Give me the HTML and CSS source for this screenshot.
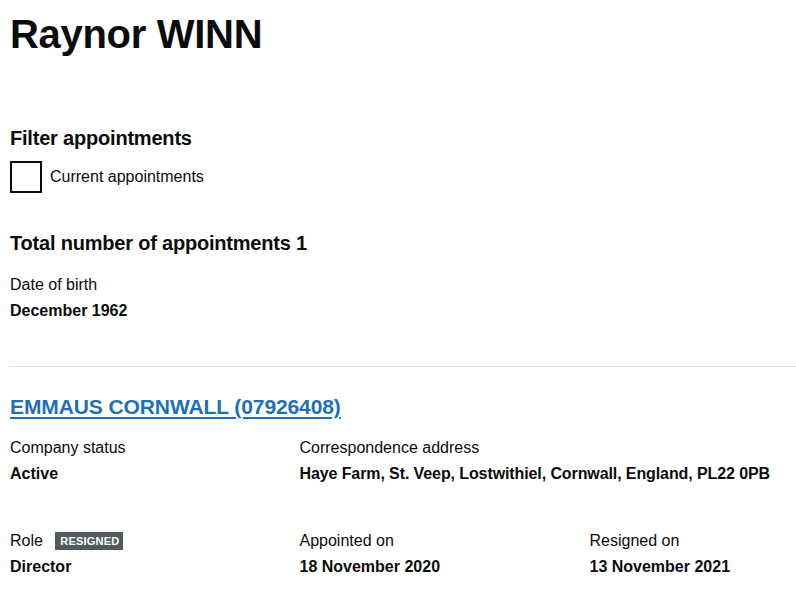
FILE: index.html
```html
<!DOCTYPE html>
<html lang="en">

<head>
    <meta charset="UTF-8">
    <meta name="viewport" content="width=device-width, initial-scale=1.0">
    <title>Raynor WINN personal appointments</title>
    <link rel="stylesheet" href="styles.css">
</head>

<body>
    <main class="page">
        <h1 class="officer-name">Raynor WINN</h1>

        <!-- filter -->
        <form class="filter">
            <h2 class="heading-m">Filter appointments</h2>
            <label class="checkbox">
                <input type="checkbox" class="checkbox-input">
                <span class="checkbox-box"></span>
                <span class="checkbox-label">Current appointments</span>
            </label>
        </form>

        <h2 class="heading-m total">Total number of appointments 1</h2>

        <dl class="dob">
            <dt>Date of birth</dt>
            <dd>December 1962</dd>
        </dl>

        <hr class="break">

        <!-- appointment -->
        <div class="appointment">
            <h2 class="appointment-title">
                <a href="#" class="link">EMMAUS CORNWALL (07926408)</a>
            </h2>

            <div class="row">
                <dl class="col">
                    <dt>Company status</dt>
                    <dd>Active</dd>
                </dl>
                <dl class="col col-wide">
                    <dt>Correspondence address</dt>
                    <dd class="address">Haye Farm, St. Veep, Lostwithiel, Cornwall, England, PL22 0PB</dd>
                </dl>
            </div>

            <div class="row">
                <dl class="col">
                    <dt>Role <span class="tag">Resigned</span></dt>
                    <dd>Director</dd>
                </dl>
                <dl class="col">
                    <dt>Appointed on</dt>
                    <dd>18 November 2020</dd>
                </dl>
                <dl class="col">
                    <dt>Resigned on</dt>
                    <dd>13 November 2021</dd>
                </dl>
            </div>
        </div>
    </main>
</body>

</html>
```

FILE: styles.css
```css
* {
    margin: 0;
    padding: 0;
    box-sizing: border-box;
}

body {
    font-family: "Liberation Sans", Arial, sans-serif;
    color: #0b0c0c;
    background: #fff;
    overflow-x: hidden;
}

.page {
    padding: 9px 0 0 10px;
}

.officer-name {
    font-size: 40px;
    line-height: 50px;
    font-weight: 700;
    letter-spacing: -0.3px;
    margin-bottom: 67px;
}

.heading-m {
    font-size: 20px;
    line-height: 25px;
    font-weight: 700;
    letter-spacing: -0.2px;
}

/* checkbox */
.checkbox {
    display: flex;
    align-items: center;
    gap: 8px;
    margin-top: 10px;
    height: 32px;
    cursor: pointer;
}

.checkbox-input {
    display: none;
}

.checkbox-box {
    width: 32px;
    height: 32px;
    border: 2px solid #0b0c0c;
    background: #fff;
}

.checkbox-label {
    font-size: 16px;
    line-height: 20px;
}

.total {
    margin-top: 38px;
}

dt,
dd {
    font-size: 16px;
    line-height: 26px;
}

dd {
    font-weight: 700;
}

.address {
    letter-spacing: -0.1px;
}

.dob {
    margin-top: 16px;
}

.break {
    border: 0;
    border-top: 1px solid #dedede;
    margin-top: 42px;
}

.appointment-title {
    margin-top: 26px;
    font-size: 21px;
    line-height: 28px;
    font-weight: 700;
    letter-spacing: -0.1px;
}

.link {
    color: #1d70b8;
    text-decoration: underline;
    text-decoration-thickness: 2px;
    text-underline-offset: 3px;
}

.row {
    display: grid;
    grid-template-columns: 289.5px 290px 1fr;
}

.row + .row {
    margin-top: 41px;
}

.appointment .row:first-of-type {
    margin-top: 14px;
}

.col-wide {
    grid-column: span 2;
}

.tag {
    display: inline-block;
    vertical-align: 1px;
    margin-left: 8px;
    padding: 0 4px 0 5px;
    background: #505a5f;
    color: #fff;
    font-size: 11px;
    line-height: 18px;
    font-weight: 700;
    text-transform: uppercase;
    letter-spacing: 0.2px;
}
```
